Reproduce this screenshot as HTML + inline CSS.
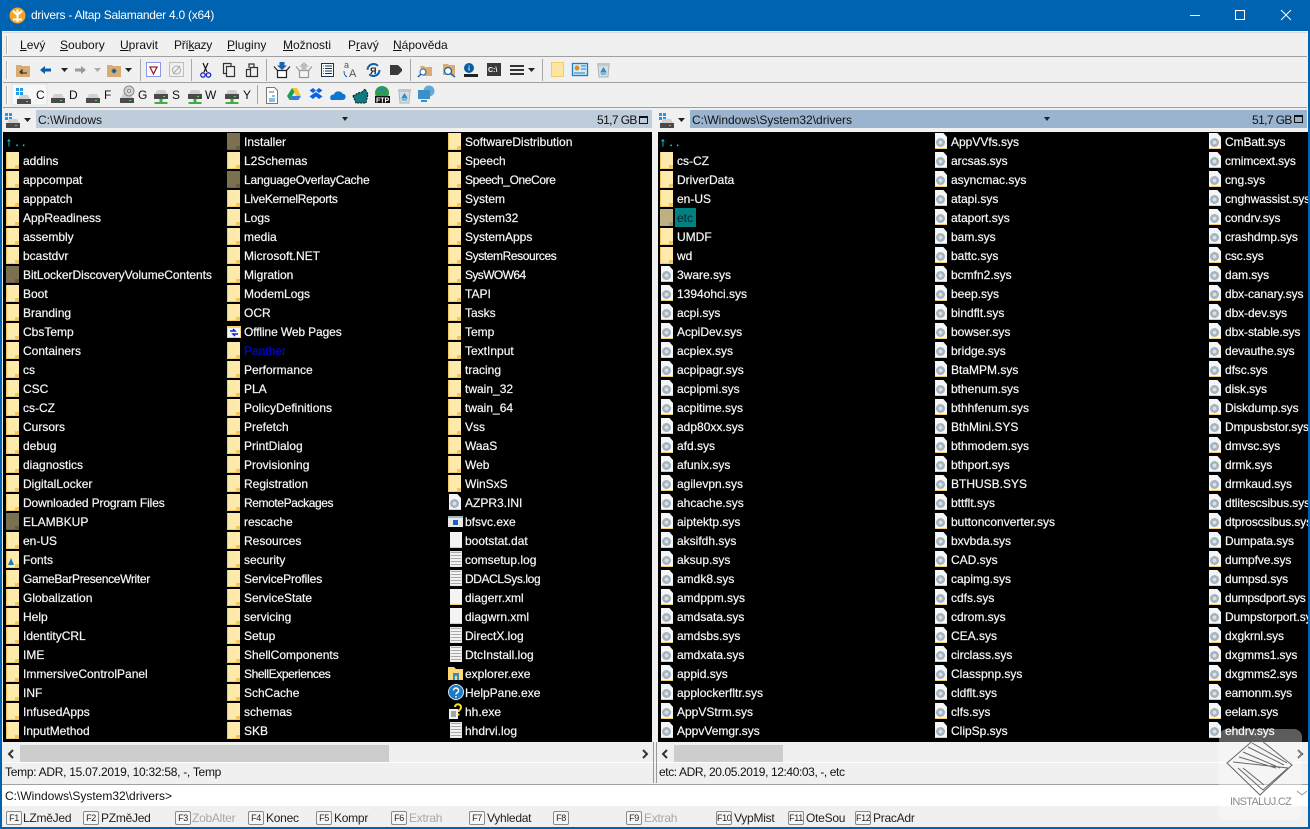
<!DOCTYPE html>
<html><head><meta charset="utf-8"><title>drivers - Altap Salamander 4.0 (x64)</title>
<style>
html,body{margin:0;padding:0;width:1310px;height:829px;overflow:hidden;background:#f0f0f0}
body{position:relative;font:12px/19px "Liberation Sans",sans-serif;color:#111}
div,span,svg{position:absolute}
.t{white-space:nowrap}
.bar{left:3px;width:1304px;background:#f0f0f0;box-sizing:border-box}
u{text-decoration:underline;position:static}
.col{top:0}
.list{background:#000;overflow:hidden}
p{margin:0;height:19px;line-height:21px;padding-left:17px;color:#f4f4f4;white-space:nowrap;position:relative;-webkit-text-stroke:.2px #fff}
p:before{content:"";position:absolute;left:0;top:1px;width:13px;height:17px;background:linear-gradient(90deg,#f0c964 0,#f0c964 1px,#fde9a7 1px,#fdeaae 100%);box-shadow:inset 0 -1px #f3cd66}
p:after{content:"";position:absolute;left:9px;top:14px;width:4px;height:4px;background:#f2c75c}
p.h:before{background:#7b7150;box-shadow:inset 0 -1px #6a6143}
p.h:after{background:#665d3f}
p.e:before{background:#bdb184;box-shadow:none}
p.e:after{background:#a89c6e}
p.s:before{left:1px;width:12px;height:16px;background:#f4f6f8;clip-path:polygon(0 0,70% 0,100% 25%,100% 100%,0 100%)}
p.s:after{left:2px;top:6px;width:9px;height:9px;border-radius:50%;background:radial-gradient(circle,#cfe2f2 0,#cfe2f2 28%,#a8b2bb 32%,#a8b2bb 70%,#e4e8ec 78%)}
p.l:before{left:2px;width:12px;height:16px;background:repeating-linear-gradient(180deg,#f2f2f2 0,#f2f2f2 1px,#a9a9a9 1px,#a9a9a9 2px,#f2f2f2 2px,#f2f2f2 3px);box-shadow:inset 0 0 0 1px #e6e6e6}
p.l:after{display:none}
p.b:before{left:2px;width:12px;height:16px;background:#f4f4f4}
p.b:after{display:none}
p.n:before,p.n:after{display:none}
p svg{left:0;top:1px}
p.up{color:#19d4e0;-webkit-text-stroke:.3px #19d4e0;padding-left:0}
p.up:before,p.up:after{display:none}
.a{letter-spacing:-.4px}
.sb{height:18px;top:745px;background:#f0f0f0}
.th{height:18px;top:745px;background:#cdcdcd}
.fk{top:811px;border:1px solid #8a8a8a;border-radius:2px;font-size:9px;line-height:13px;text-align:center;background:#f7f7f7;color:#222;width:14px;height:12px;letter-spacing:-.4px;overflow:hidden}
.fl{top:809px;white-space:nowrap;color:#222;letter-spacing:-.25px}
.dis{color:#a8a8a8}
</style></head><body>

<!-- title bar -->
<div style="left:0;top:0;width:1310px;height:31px;background:#0063b1"></div>
<svg style="left:9px;top:7px" width="17" height="17" viewBox="0 0 17 17"><circle cx="8.5" cy="8.5" r="8" fill="#f2a52e"/><path d="M8.5 15V8M8.5 8L4 4M8.5 8L13 4M8.5 6V2.5M4 12.5h9" stroke="#fff" stroke-width="2" fill="none"/></svg>
<div class="t" style="left:31px;top:6px;color:#fff;letter-spacing:-.25px">drivers - Altap Salamander 4.0 (x64)</div>
<svg style="left:1185px;top:5px" width="110" height="22" viewBox="0 0 110 22" fill="none" stroke="#fff"><path d="M5 10.5h10"/><rect x="50.5" y="5.5" width="9" height="9"/><path d="M96 5l10 10M106 5l-10 10"/></svg>

<!-- frame -->
<div style="left:0;top:31px;width:2px;height:798px;background:#0063b1"></div>
<div style="left:1308px;top:31px;width:2px;height:798px;background:#0063b1"></div>
<div style="left:0;top:827px;width:1310px;height:2px;background:#0063b1"></div>

<!-- menu -->
<div class="bar" style="top:32px;height:25px;border-bottom:1px solid #a0a0a0;border-top:1px solid #d8d8d8"></div>
<div class="bar" style="top:57px;height:26px;border-bottom:1px solid #a0a0a0"></div>
<div class="bar" style="top:83px;height:25px;border-bottom:1px solid #a0a0a0"></div>
<div class="t" style="left:20px;top:36px"><u>L</u>evý</div>
<div class="t" style="left:60px;top:36px"><u>S</u>oubory</div>
<div class="t" style="left:120px;top:36px"><u>U</u>pravit</div>
<div class="t" style="left:174px;top:36px;letter-spacing:-.3px">Pří<u>k</u>azy</div>
<div class="t" style="left:227px;top:36px"><u>P</u>luginy</div>
<div class="t" style="left:283px;top:36px"><u>M</u>ožnosti</div>
<div class="t" style="left:348px;top:36px">P<u>r</u>avý</div>
<div class="t" style="left:393px;top:36px"><u>N</u>ápověda</div>

<!-- toolbar icons -->
<svg style="left:0;top:32px" width="700" height="100" viewBox="0 32 700 100">
<defs>
<g id="dr"><path d="M2 5L4 1H12L14 5Z" fill="#cfcfcf"/><rect x="1" y="5" width="14" height="5" fill="#4a4a4a"/><rect x="10" y="7" width="2" height="1" fill="#5fd35f"/></g>
<g id="nd"><path d="M2 4L4 0H12L14 4Z" fill="#cfcfcf"/><rect x="1" y="4" width="14" height="5" fill="#4a4a4a"/><rect x="10" y="6" width="2" height="1" fill="#5fd35f"/><path d="M6.500 9h3v3h5v2H1.500v-2h5z" fill="#3fae3f"/></g>
<g id="wf" fill="#1e9be8"><rect width="3" height="3"/><rect x="4" width="3" height="3"/><rect y="4" width="3" height="3"/><rect x="4" y="4" width="3" height="3"/></g>
<g id="gr"><path d="M.5 0V18" stroke="#b5b5b5"/><path d="M1.500 0V18" stroke="#fff"/></g>
<path id="da" d="M0 0h7l-3.500 4z" fill="#222"/>
<g id="rb"><path d="M2 3h11l-1 12H3z" fill="#d6dde3" stroke="#aeb6bd"/><rect x="1" y="1" width="13" height="2" fill="#bfc6cc"/><path d="M7.500 6l2.500 4h-5zM5 12h5" fill="#2f8fc7" stroke="#2f8fc7"/></g>
</defs>
<!-- grips -->
<use href="#gr" x="6" y="36"/><use href="#gr" x="6" y="61"/><use href="#gr" x="6" y="86"/>
<!-- row1 -->
<path d="M16 65h5l1 1h8v11H16z" fill="#d9ad72"/><path d="M27 73h-5v-3l-2 2 2 2" stroke="#222" fill="none"/>
<path d="M40 70l5-4v2.500h6v3h-6v2.500z" fill="#0a5ea8"/><use href="#da" x="61" y="68"/>
<path d="M86 70l-5-4v2.500h-6v3h6v2.500z" fill="#9a9a9a"/><path d="M94 68h7l-3.500 4z" fill="#aaa"/>
<path d="M107 65h5l1 1h8v11h-14z" fill="#d9ad72"/><path d="M114 68.500v5M111.500 71h5M112.500 69.500l3 3M115.500 69.500l-3 3" stroke="#0a4fa8"/><use href="#da" x="125" y="68"/>
<path d="M140.500 59v22M191.500 59v22M266.500 59v22M410.500 59v22M542.500 59v22" stroke="#a8a8a8"/>
<rect x="146.500" y="62.500" width="14" height="14" fill="#fff" stroke="#1b39d8" stroke-dasharray="1 1"/><path d="M150 67h7l-3.500 7z" fill="none" stroke="#a0222c" stroke-width="1.300"/>
<rect x="169.500" y="62.500" width="14" height="14" fill="none" stroke="#8a8a8a" stroke-dasharray="1 1"/><ellipse cx="176.500" cy="70" rx="4" ry="4" fill="none" stroke="#aaa"/><path d="M173 74l7-8" stroke="#aaa"/>
<path d="M203 63l4 9M208 63l-4 9" stroke="#111" stroke-width="1.200"/><circle cx="203" cy="75" r="2.200" fill="none" stroke="#1723c8" stroke-width="1.300"/><circle cx="208.500" cy="75" r="2.200" fill="none" stroke="#1723c8" stroke-width="1.300"/>
<path d="M231 66v-2.500h-7.500v10h3" fill="none" stroke="#333" stroke-width="1.200"/><rect x="226.500" y="66.500" width="8" height="10" fill="none" stroke="#333" stroke-width="1.200"/>
<path d="M246.500 69.500h4v7h-4zM250.500 67.500h7v9h-7z" fill="none" stroke="#333" stroke-width="1.200"/><path d="M249 68v-4h5v3" fill="none" stroke="#333" stroke-width="1.200"/>
<path d="M277.500 70.500h9v7h-9z" fill="#fff" stroke="#222" stroke-width="1.200"/><path d="M274 66.500l3.500 4M290 66.500l-3.500 4" stroke="#222" stroke-width="1.200" fill="none"/><path d="M279.500 62h5v3.500h2.500l-5 4.500-5-4.500h2.500z" fill="#1864b4"/>
<path d="M299.500 70.500h9v7h-9z" fill="#f4f4f4" stroke="#999" stroke-width="1.200"/><path d="M296 66.500l3.500 4M312 66.500l-3.500 4" stroke="#999" stroke-width="1.200" fill="none"/><path d="M304 62l5 4.500h-2.500v3h-5v-3H299z" fill="#bbb"/>
<rect x="321.500" y="63.500" width="12" height="13" fill="#fff" stroke="#16345c"/><path d="M323 66h1M323 68.500h1M323 71h1M323 73.500h1" stroke="#1864b4"/><path d="M325 66h7M325 68.500h7M325 71h7M325 73.500h7" stroke="#16345c"/>
<text x="344" y="68" font-size="9" fill="#555">a</text><text x="349" y="77" font-size="11" fill="#555">A</text><path d="M344 71c0 3 1 5 3 6" fill="none" stroke="#1864b4"/>
<circle cx="373.500" cy="70" r="6" fill="none" stroke="#125ea4" stroke-width="2" stroke-dasharray="14 5"/><text x="370" y="74" font-size="9" font-weight="bold" fill="#222">Я</text>
<path d="M390 65h8l4 4v2l-4 4h-8z" fill="#3a3a3a"/>
<path d="M420 66h4l1 1h7v9h-9z" fill="#d9ad72"/><circle cx="423" cy="72" r="3" fill="#fff" stroke="#1864b4"/><path d="M421 74l-3 3" stroke="#1864b4" stroke-width="1.500"/>
<path d="M443 64h5l1 1h6v10h-12z" fill="#d9ad72"/><circle cx="448" cy="71" r="3.500" fill="#fff" stroke="#1864b4" stroke-width="1.300"/><path d="M451 74l4 3" stroke="#1864b4" stroke-width="1.500"/>
<circle cx="469" cy="68" r="5" fill="#0a5ea8"/><path d="M469 65.500v1M469 67.500v3" stroke="#fff"/><rect x="464" y="74" width="14" height="3" fill="#222"/>
<rect x="487" y="63" width="14" height="13" fill="#3a3a3a"/><text x="488" y="72" font-size="7" fill="#fff" font-weight="bold">C:\</text>
<path d="M510 66h14M510 70h14M510 74h14" stroke="#333" stroke-width="2"/><use href="#da" x="528" y="68"/>
<path d="M551.500 62.500h12v14h-12z" fill="#fde7a0" stroke="#f1cd66"/>
<rect x="572.500" y="63.500" width="15" height="12" fill="#d5ecfa" stroke="#1c7cc4" stroke-width="1.300"/><circle cx="577" cy="68" r="2.500" fill="#e08a1e"/><path d="M581 66h5M581 69h5M574 73h11" stroke="#1c7cc4"/>
<use href="#rb" x="596" y="62"/>
<!-- row2 -->
<rect x="12" y="84" width="35" height="21" fill="#f8f8f8" stroke="#e2e2e2"/>
<use href="#wf" x="16" y="88"/><use href="#dr" x="16" y="94"/>
<use href="#dr" x="50" y="93"/><use href="#dr" x="85" y="93"/>
<use href="#dr" x="119" y="93"/><circle cx="129" cy="91" r="5" fill="#d4d4d4" stroke="#888"/><circle cx="129" cy="91" r="1.500" fill="#fff" stroke="#888"/>
<use href="#nd" x="153" y="90"/><use href="#nd" x="187" y="90"/><use href="#nd" x="224" y="90"/>
<path d="M257.500 85v19" stroke="#a8a8a8"/>
<path d="M266.500 87.500h8l3 3v13h-11z" fill="#fff" stroke="#777"/><path d="M269 92h5M272 96h3M269 99h6M269 101h6" stroke="#1a7ec4"/>
<path d="M292 88h5l4 8h-5z" fill="#f7c52f"/><path d="M292 88l-5 8 2.500 4 5-8z" fill="#1b9e55"/><path d="M289.500 100h9l2.500-4h-9z" fill="#3a78e0"/>
<path d="M313 88l3 2.500-3 2.500-3.500-2.500zM319 88l3.500 2.500-3.500 2.500-3-2.500zM313 94l3-2 3 2-3 2.500zM313 94l-3.500 2.500 3.500 2.500 3-2.500zM319 94l3.500 2.500-3.500 2.500-3-2.500z" fill="#0a62e0"/>
<path d="M331 100c-2-3 0-6 3-5.500 1-4 7-4 9-.5 3-.5 4 5 0 6z" fill="#0f76d0"/>
<path d="M353 96l5-3 4-1 3-3 3 5-2 9h-10z" fill="#107a80" stroke="#111" stroke-dasharray="2 1"/>
<circle cx="382" cy="93" r="7" fill="#2e9e48"/><path d="M378 91q4-5 8 0" fill="#2c82cc"/><rect x="375" y="96" width="15" height="7" fill="#111"/><text x="376" y="102.500" font-size="7" font-weight="bold" fill="#fff">FTP</text>
<use href="#rb" x="397" y="88"/>
<circle cx="429" cy="91" r="5.500" fill="#62a9d8"/><rect x="418" y="90" width="12" height="9" fill="#3e8ec8"/><path d="M421 101h6" stroke="#3e8ec8" stroke-width="2"/>
<!-- left panel head -->
<use href="#wf" x="5" y="113"/><use href="#dr" x="5" y="118"/><use href="#da" x="24" y="118"/>
<!-- right panel head -->
<use href="#wf" x="659" y="113"/><use href="#dr" x="659" y="118"/>
<use href="#da" x="678" y="118"/>
</svg>
<div class="t" style="left:36px;top:86px">C</div>
<div class="t" style="left:69px;top:86px">D</div>
<div class="t" style="left:104px;top:86px">F</div>
<div class="t" style="left:138px;top:86px">G</div>
<div class="t" style="left:172px;top:86px">S</div>
<div class="t" style="left:205px;top:86px">W</div>
<div class="t" style="left:243px;top:86px">Y</div>

<!-- panel heads -->
<div style="left:36px;top:110px;width:616px;height:18px;background:#bfcddb"></div>
<div class="t" style="left:38px;top:111px">C:\Windows</div>
<div style="left:342px;top:117px;width:0;height:0;border:3.5px solid transparent;border-top:4px solid #222"></div>
<div class="t" style="left:597px;top:111px;letter-spacing:-.6px">51,7 GB</div>
<div style="left:639px;top:116px;width:7px;height:5px;border:1px solid #111;border-top-width:2px"></div>
<div style="left:690px;top:110px;width:617px;height:18px;background:#9ab4d0"></div>
<div class="t" style="left:692px;top:111px">C:\Windows\System32\drivers</div>
<div style="left:1044px;top:117px;width:0;height:0;border:3.500px solid transparent;border-top:4px solid #222"></div>
<div class="t" style="left:1252px;top:111px;letter-spacing:-.6px">51,7 GB</div>
<div style="left:1294px;top:115px;width:7px;height:5px;border:1px solid #111;border-top-width:2px"></div>

<!-- left list -->
<div class="list" style="left:3px;top:132px;width:649px;height:610px"></div>
<div class="list" style="left:658px;top:132px;width:650px;height:610px"></div>
<div style="left:0;top:132px;width:652px;height:610px;overflow:hidden">
<div class="col" style="left:6px;width:218px">
<p class="up n">↑ . .</p><p>addins</p><p>appcompat</p><p>apppatch</p><p>AppReadiness</p><p>assembly</p><p>bcastdvr</p><p class="h" style="letter-spacing:-.06px">BitLockerDiscoveryVolumeContents</p><p>Boot</p><p>Branding</p><p>CbsTemp</p><p>Containers</p><p>cs</p><p>CSC</p><p>cs-CZ</p><p>Cursors</p><p>debug</p><p>diagnostics</p><p>DigitalLocker</p><p style="letter-spacing:-.13px">Downloaded Program Files</p><p class="h">ELAMBKUP</p><p>en-US</p><p>Fonts<svg width="13" height="17" viewBox="0 0 13 17"><path d="M5 7l3 7H2z" fill="#1c7ac4"/></svg></p><p style="letter-spacing:-.33px">GameBarPresenceWriter</p><p>Globalization</p><p>Help</p><p>IdentityCRL</p><p>IME</p><p>ImmersiveControlPanel</p><p>INF</p><p>InfusedApps</p><p>InputMethod</p>
</div>
<div class="col" style="left:227px;width:218px">
<p class="h">Installer</p><p>L2Schemas</p><p class="h" style="letter-spacing:-.2px">LanguageOverlayCache</p><p class="a" style="letter-spacing:-.3px">LiveKernelReports</p><p>Logs</p><p>media</p><p>Microsoft.NET</p><p>Migration</p><p>ModemLogs</p><p>OCR</p><p class="n" style="letter-spacing:-.12px"><svg width="16" height="17" viewBox="0 0 16 17"><rect x="0" y="3" width="14" height="12" fill="#f5d66c"/><rect x="1" y="5" width="12" height="9" fill="#f8f8f8"/><path d="M3 8h5l-2-2M11 11H6l2 2" stroke="#1723c8" stroke-width="1.500" fill="none"/></svg>Offline Web Pages</p><p style="color:#0000f0;-webkit-text-stroke:.2px #0000f0">Panther</p><p>Performance</p><p>PLA</p><p>PolicyDefinitions</p><p>Prefetch</p><p>PrintDialog</p><p>Provisioning</p><p>Registration</p><p class="a">RemotePackages</p><p>rescache</p><p>Resources</p><p>security</p><p style="letter-spacing:-.13px">ServiceProfiles</p><p>ServiceState</p><p>servicing</p><p>Setup</p><p>ShellComponents</p><p class="a">ShellExperiences</p><p>SchCache</p><p>schemas</p><p>SKB</p>
</div>
<div class="col" style="left:448px;width:204px">
<p>SoftwareDistribution</p><p>Speech</p><p class="a">Speech_OneCore</p><p>System</p><p>System32</p><p>SystemApps</p><p class="a">SystemResources</p><p style="letter-spacing:-.6px">SysWOW64</p><p>TAPI</p><p>Tasks</p><p>Temp</p><p>TextInput</p><p>tracing</p><p>twain_32</p><p>twain_64</p><p>Vss</p><p>WaaS</p><p>Web</p><p>WinSxS</p><p class="s">AZPR3.INI</p>
<p class="n"><svg width="16" height="17" viewBox="0 0 16 17"><rect x="0" y="3" width="15" height="11" fill="#e8e8e8"/><rect x="0" y="3" width="15" height="2" fill="#9fb4c8"/><rect x="5" y="7" width="5" height="5" fill="#1c62c4"/></svg>bfsvc.exe</p>
<p class="b">bootstat.dat</p><p class="l">comsetup.log</p><p class="l a">DDACLSys.log</p><p class="b">diagerr.xml</p><p class="b">diagwrn.xml</p><p class="l">DirectX.log</p><p class="l">DtcInstall.log</p>
<p class="n"><svg width="16" height="17" viewBox="0 0 16 17"><path d="M0 2h6l2 2h7v11H0z" fill="#fbd872"/><rect x="5" y="8" width="6" height="7" fill="#2c8fd8"/><rect x="7" y="11" width="2" height="4" fill="#fbd872"/></svg>explorer.exe</p>
<p class="n"><svg width="16" height="17" viewBox="0 0 16 17"><circle cx="8" cy="8" r="7.500" fill="#1c7ac4" stroke="#cfe4f4"/><path d="M5.500 6.500a2.500 2.500 0 1 1 3.500 2.300c-.7.400-1 .7-1 1.700M8 12v1.500" fill="none" stroke="#fff" stroke-width="1.500"/></svg>HelpPane.exe</p>
<p class="n"><svg width="16" height="17" viewBox="0 0 16 17"><rect x="1" y="6" width="9" height="10" fill="#f2f2f2"/><path d="M3 9h5M3 11h5M3 13h5" stroke="#555"/><path d="M7 4a3 3 0 1 1 5 2.500c-1 .8-1.500 1-1.500 2.500M10.500 10.500v2" fill="none" stroke="#f5e02e" stroke-width="2"/></svg>hh.exe</p>
<p class="l">hhdrvi.log</p>
</div>
</div>

<!-- right list -->
<div style="left:660px;top:132px;width:648px;height:610px;overflow:hidden">
<div class="col" style="left:0;width:270px">
<p class="up n">↑ . .</p><p>cs-CZ</p><p>DriverData</p><p>en-US</p><p class="e" style="color:#06242a;-webkit-text-stroke:0"><span style="left:15px;top:0;width:21px;height:19px;background:#008080"></span><span style="left:17px;top:0">etc</span></p><p>UMDF</p><p>wd</p><p class="s">3ware.sys</p><p class="s">1394ohci.sys</p><p class="s">acpi.sys</p><p class="s">AcpiDev.sys</p><p class="s">acpiex.sys</p><p class="s">acpipagr.sys</p><p class="s">acpipmi.sys</p><p class="s">acpitime.sys</p><p class="s">adp80xx.sys</p><p class="s">afd.sys</p><p class="s">afunix.sys</p><p class="s">agilevpn.sys</p><p class="s">ahcache.sys</p><p class="s">aiptektp.sys</p><p class="s">aksifdh.sys</p><p class="s">aksup.sys</p><p class="s">amdk8.sys</p><p class="s">amdppm.sys</p><p class="s">amdsata.sys</p><p class="s">amdsbs.sys</p><p class="s">amdxata.sys</p><p class="s">appid.sys</p><p class="s">applockerfltr.sys</p><p class="s">AppVStrm.sys</p><p class="s">AppvVemgr.sys</p>
</div>
<div class="col" style="left:274px;width:270px">
<p class="s">AppVVfs.sys</p><p class="s">arcsas.sys</p><p class="s">asyncmac.sys</p><p class="s">atapi.sys</p><p class="s">ataport.sys</p><p class="s">bam.sys</p><p class="s">battc.sys</p><p class="s">bcmfn2.sys</p><p class="s">beep.sys</p><p class="s">bindflt.sys</p><p class="s">bowser.sys</p><p class="s">bridge.sys</p><p class="s">BtaMPM.sys</p><p class="s">bthenum.sys</p><p class="s">bthhfenum.sys</p><p class="s">BthMini.SYS</p><p class="s">bthmodem.sys</p><p class="s">bthport.sys</p><p class="s">BTHUSB.SYS</p><p class="s">bttflt.sys</p><p class="s">buttonconverter.sys</p><p class="s">bxvbda.sys</p><p class="s">CAD.sys</p><p class="s">capimg.sys</p><p class="s">cdfs.sys</p><p class="s">cdrom.sys</p><p class="s">CEA.sys</p><p class="s">circlass.sys</p><p class="s">Classpnp.sys</p><p class="s">cldflt.sys</p><p class="s">clfs.sys</p><p class="s">ClipSp.sys</p>
</div>
<div class="col" style="left:548px;width:100px;overflow:hidden;letter-spacing:-.1px">
<p class="s">CmBatt.sys</p><p class="s">cmimcext.sys</p><p class="s">cng.sys</p><p class="s">cnghwassist.sys</p><p class="s">condrv.sys</p><p class="s">crashdmp.sys</p><p class="s">csc.sys</p><p class="s">dam.sys</p><p class="s">dbx-canary.sys</p><p class="s">dbx-dev.sys</p><p class="s">dbx-stable.sys</p><p class="s">devauthe.sys</p><p class="s">dfsc.sys</p><p class="s">disk.sys</p><p class="s">Diskdump.sys</p><p class="s">Dmpusbstor.sys</p><p class="s">dmvsc.sys</p><p class="s">drmk.sys</p><p class="s">drmkaud.sys</p><p class="s">dtlitescsibus.sys</p><p class="s">dtproscsibus.sys</p><p class="s">Dumpata.sys</p><p class="s">dumpfve.sys</p><p class="s">dumpsd.sys</p><p class="s" style="letter-spacing:-.3px">dumpsdport.sys</p><p class="s">Dumpstorport.sys</p><p class="s">dxgkrnl.sys</p><p class="s">dxgmms1.sys</p><p class="s">dxgmms2.sys</p><p class="s">eamonm.sys</p><p class="s">eelam.sys</p><p class="s">ehdrv.sys</p>
</div>
</div>

<!-- scrollbars -->
<div class="th" style="left:20px;width:369px"></div>
<div class="th" style="left:674px;width:109px"></div>
<svg style="left:0;top:745px" width="1310" height="18" viewBox="0 745 1310 18" fill="none" stroke="#333" stroke-width="2"><path d="M13 750l-4 4 4 4M643 750l4 4-4 4M667 750l-4 4 4 4M1298 750l4 4-4 4"/></svg>
<div style="left:3px;top:762px;width:1304px;height:1px;background:#fff"></div>
<div style="left:653px;top:742px;width:1px;height:41px;background:#999"></div>
<div style="left:656px;top:742px;width:1px;height:41px;background:#999"></div>

<!-- status -->
<div class="t" style="left:5px;top:763px;letter-spacing:-.28px">Temp: ADR, 15.07.2019, 10:32:58, -, Temp</div>
<div class="t" style="left:659px;top:763px;letter-spacing:-.4px">etc: ADR, 20.05.2019, 12:40:03, -, etc</div>
<div style="left:2px;top:784px;width:1306px;height:1px;background:#a0a0a0"></div>

<!-- command line -->
<div style="left:2px;top:785px;width:1306px;height:21px;background:#fff"></div>
<div class="t" style="left:5px;top:787px">C:\Windows\System32\drivers&gt;</div>

<!-- function keys -->
<div class="fk" style="left:6px">F1</div><div class="fl" style="left:23px">LZměJed</div>
<div class="fk" style="left:83px">F2</div><div class="fl" style="left:101px">PZměJed</div>
<div class="fk" style="left:175px">F3</div><div class="fl dis" style="left:192px">ZobAlter</div>
<div class="fk" style="left:248px">F4</div><div class="fl" style="left:266px">Konec</div>
<div class="fk" style="left:316px">F5</div><div class="fl" style="left:334px">Kompr</div>
<div class="fk" style="left:391px">F6</div><div class="fl dis" style="left:409px">Extrah</div>
<div class="fk" style="left:469px">F7</div><div class="fl" style="left:487px">Vyhledat</div>
<div class="fk" style="left:553px">F8</div>
<div class="fk" style="left:626px">F9</div><div class="fl dis" style="left:644px">Extrah</div>
<div class="fk" style="left:716px">F10</div><div class="fl" style="left:734px">VypMist</div>
<div class="fk" style="left:788px">F11</div><div class="fl" style="left:806px">OteSou</div>
<div class="fk" style="left:855px">F12</div><div class="fl" style="left:873px">PracAdr</div>

<!-- watermark -->
<div style="left:1219px;top:729px;width:83px;height:91px;background:rgba(255,255,255,.36);border-radius:8px"></div>
<svg style="left:1219px;top:729px" width="83" height="70" viewBox="1219 729 83 70" fill="none" stroke="#666" stroke-width="1"><path d="M1257 737L1292 765 1260 795 1227 763ZM1252 743L1287 763M1248 747L1284 765M1243 752L1280 768M1239 757L1276 768M1233 762L1288 768 1263 790 1238 768M1243 768L1264 785"/></svg>
<div class="t" style="left:1230px;top:793px;color:#8a8a8a;font-size:11px;letter-spacing:-.7px">INSTALUJ.CZ</div>
<svg style="left:1296px;top:790px" width="12" height="8" viewBox="0 0 12 8" fill="none" stroke="#999"><path d="M1 1l5 4 5-4"/></svg>
</body></html>
